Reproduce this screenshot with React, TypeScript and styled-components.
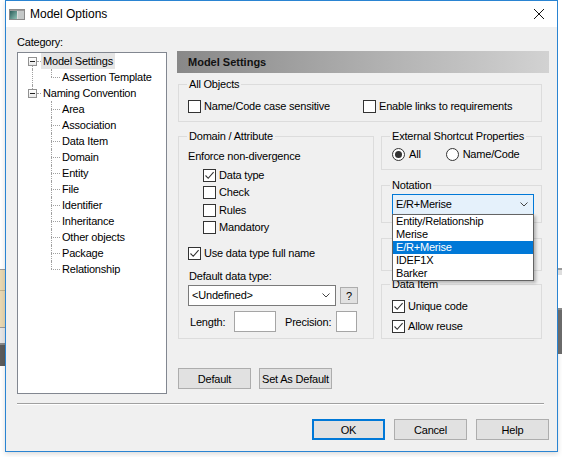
import React from "react";
import styled, { createGlobalStyle } from "styled-components";

const GlobalStyle = createGlobalStyle`
  html, body {
    margin: 0;
    padding: 0;
    background: #fff;
  }
  body {
    font-family: "Liberation Sans", Arial, sans-serif;
    font-size: 11px;
    color: #000;
  }
`;

const Screen = styled.div`
  display: flex;
  width: 562px;
  height: 457px;
  overflow: hidden;
  background: #fff;
`;

const Strip = styled.div<{ $w: number }>`
  display: flex;
  flex-direction: column;
  flex: none;
  width: ${(p) => p.$w}px;
`;

const Band = styled.div<{ $h: number; $bg: string }>`
  flex: none;
  height: ${(p) => p.$h}px;
  background: ${(p) => p.$bg};
`;

const Window = styled.div`
  box-sizing: border-box;
  flex: none;
  display: flex;
  flex-direction: column;
  width: 553px;
  height: 452px;
  border: 1px solid #2a84d2;
  background: #f0f0f0;
  box-shadow: 0 2px 5px rgba(0, 0, 0, 0.15);
`;

const TitleBar = styled.div`
  display: flex;
  align-items: center;
  height: 26px;
  padding-left: 3px;
  background: #fff;
  font-size: 12px;
`;

const TitleText = styled.span`
  margin-left: 5px;
  flex: 1;
`;

const CloseIcon = styled.svg`
  margin-right: 13px;
`;

const Body = styled.div`
  flex: 1;
  display: flex;
  flex-direction: column;
  padding: 9px 8px 0 11px;
  letter-spacing: -0.2px;
`;

const MainRow = styled.div`
  display: flex;
  align-items: flex-start;
  gap: 10px;
`;

const Sidebar = styled.div`
  display: flex;
  flex-direction: column;
  width: 150px;
`;

const CategoryLabel = styled.div`
  line-height: 13px;
  margin-bottom: 3px;
`;

const TreeBox = styled.div`
  box-sizing: border-box;
  height: 342px;
  border: 1px solid #828790;
  background: #fff;
  padding-left: 10px;
`;

const TreeRow = styled.div`
  display: flex;
  align-items: center;
  height: 16px;
`;

const ExpanderCell = styled.span<{ $up?: boolean; $down?: boolean }>`
  position: relative;
  display: flex;
  align-items: center;
  width: 9px;
  height: 16px;

  &::before {
    content: "";
    position: absolute;
    left: 4px;
    top: ${(p) => (p.$up ? "0" : "50%")};
    bottom: ${(p) => (p.$down ? "0" : "50%")};
    border-left: 1px dotted #a0a0a0;
  }
`;

const Expander = styled.span`
  position: relative;
  z-index: 1;
  box-sizing: border-box;
  width: 9px;
  height: 9px;
  border: 1px solid #919191;
  background: linear-gradient(#fff, #e8e8e8);

  &::after {
    content: "";
    position: absolute;
    left: 1px;
    right: 1px;
    top: 3px;
    height: 1px;
    background: #222;
  }
`;

const HLine = styled.span<{ $w: number }>`
  width: ${(p) => p.$w}px;
  border-top: 1px dotted #a0a0a0;
`;

const TreeLabel = styled.span<{ $selected?: boolean }>`
  padding: 0 2px;
  line-height: 16px;
  white-space: nowrap;
  background: ${(p) => (p.$selected ? "#e5e5e5" : "transparent")};
`;

const Children = styled.div<{ $line?: boolean }>`
  margin-left: 4px;
  padding-left: 18px;
  border-left: 1px dotted ${(p) => (p.$line ? "#a0a0a0" : "transparent")};
`;

const Connector = styled.span<{ $last?: boolean }>`
  position: relative;
  width: 9px;
  height: 16px;

  &::before {
    content: "";
    position: absolute;
    left: 0;
    top: 0;
    bottom: ${(p) => (p.$last ? "50%" : "0")};
    border-left: 1px dotted #a0a0a0;
  }
  &::after {
    content: "";
    position: absolute;
    left: 0;
    right: 0;
    top: 50%;
    border-top: 1px dotted #a0a0a0;
  }
`;

const Panel = styled.div`
  width: 372px;
  margin-top: 15px;
`;

const PanelHeader = styled.div`
  display: flex;
  align-items: center;
  height: 22px;
  padding-left: 11px;
  background: linear-gradient(to right, #888 0%, #a6a6a6 40%, #d2d2d2 100%);
  font-weight: bold;
  letter-spacing: 0;
  color: #111;
`;

const PanelContent = styled.div`
  padding: 0 7px 0 1px;
`;

const Group = styled.div<{ $h: number; $mt: number }>`
  box-sizing: border-box;
  height: ${(p) => p.$h}px;
  margin-top: ${(p) => p.$mt}px;
  border: 1px solid #dcdcdc;
`;

const GroupTitle = styled.div`
  width: fit-content;
  height: 13px;
  margin: -7px 0 0 8px;
  padding: 0 2px;
  line-height: 13px;
  background: #f0f0f0;
  white-space: nowrap;
`;

const GroupBody = styled.div<{ $pad: number; $mt: number }>`
  display: flex;
  flex-direction: column;
  padding-left: ${(p) => p.$pad}px;
  margin-top: ${(p) => p.$mt}px;
`;

const TwoCols = styled.div`
  display: grid;
  grid-template-columns: 175px auto;
`;

const Columns = styled.div`
  display: grid;
  grid-template-columns: 196px 161px;
  gap: 7px;
  margin-top: 14px;
`;

const Column = styled.div`
  display: flex;
  flex-direction: column;
`;

const Check = styled.label<{ $indent?: number; $mt?: number }>`
  display: flex;
  align-items: center;
  gap: 3px;
  height: 13px;
  line-height: 13px;
  margin-left: ${(p) => p.$indent ?? 0}px;
  margin-top: ${(p) => p.$mt ?? 0}px;
  white-space: nowrap;
`;

const Box = styled.span`
  display: flex;
  align-items: center;
  justify-content: center;
  box-sizing: border-box;
  flex: none;
  width: 13px;
  height: 13px;
  border: 1px solid #333;
  background: #fff;
`;

const Text = styled.div<{ $mt?: number }>`
  line-height: 13px;
  height: 13px;
  margin-top: ${(p) => p.$mt ?? 0}px;
  white-space: nowrap;
`;

const CheckList = styled.div`
  display: flex;
  flex-direction: column;
  gap: 4.5px;
  margin-top: 6px;
`;

const RadioRow = styled.div`
  display: flex;
  align-items: center;
  gap: 25px;
  margin-top: 4.5px;
`;

const RadioCircle = styled.span<{ $on?: boolean }>`
  display: flex;
  align-items: center;
  justify-content: center;
  box-sizing: border-box;
  width: 13px;
  height: 13px;
  border: 1px solid #333;
  border-radius: 50%;
  background: #fff;

  &::after {
    content: "";
    width: 7px;
    height: 7px;
    border-radius: 50%;
    background: ${(p) => (p.$on ? "#333" : "transparent")};
  }
`;

const Radio = styled.label`
  display: flex;
  align-items: center;
  gap: 4px;
  height: 13px;
  line-height: 13px;
`;

const ComboRow = styled.div`
  display: flex;
  align-items: center;
  gap: 4px;
  margin-top: 2.5px;
`;

const Combo = styled.div<{ $w: number; $focus?: boolean }>`
  position: relative;
  box-sizing: border-box;
  display: flex;
  align-items: center;
  justify-content: space-between;
  width: ${(p) => p.$w}px;
  height: 21px;
  padding: 0 5px 0 3px;
  border: 1px solid ${(p) => (p.$focus ? "#0078d7" : "#7a7a7a")};
  background: ${(p) => (p.$focus ? "#e5f1fb" : "#fff")};
  line-height: 13px;
`;

const ListPopup = styled.div`
  position: absolute;
  top: 100%;
  left: -1px;
  right: -1px;
  z-index: 10;
  border: 1px solid #646464;
  background: #fff;
  box-shadow: 2px 2px 3px rgba(0, 0, 0, 0.25);
`;

const Option = styled.div<{ $selected?: boolean }>`
  height: 13px;
  line-height: 13px;
  padding-left: 3px;
  overflow: hidden;
  background: ${(p) => (p.$selected ? "#0078d7" : "transparent")};
  color: ${(p) => (p.$selected ? "#fff" : "#000")};
`;

const SmallButton = styled.button`
  box-sizing: border-box;
  width: 18px;
  height: 17px;
  padding: 0;
  border: 1px solid #adadad;
  background: #e1e1e1;
  font-family: inherit;
  font-size: 11px;
  color: #000;
`;

const LengthRow = styled.div`
  display: grid;
  grid-template-columns: 46px 42px 60px 21px;
  align-items: center;
  height: 21px;
  margin-top: 5px;
`;

const FieldLabel = styled.span<{ $pl: number }>`
  padding-left: ${(p) => p.$pl}px;
  white-space: nowrap;
`;

const Input = styled.div`
  box-sizing: border-box;
  height: 21px;
  border: 1px solid #a5a5a5;
  background: #fff;
`;

const Button = styled.button<{ $primary?: boolean }>`
  box-sizing: border-box;
  width: 73px;
  height: 21px;
  padding: 0;
  border: 1px solid ${(p) => (p.$primary ? "#0078d7" : "#adadad")};
  box-shadow: ${(p) => (p.$primary ? "inset 0 0 0 1px #0078d7" : "none")};
  background: #e1e1e1;
  font-family: inherit;
  font-size: 11px;
  letter-spacing: -0.2px;
  color: #000;
`;

const PanelButtons = styled.div`
  display: flex;
  gap: 8px;
  margin-top: 29px;
`;

const Separator = styled.div`
  height: 1px;
  margin: 9px 5px 0 0;
  background: #a0a0a0;
  border-bottom: 1px solid #fff;
`;

const DialogButtons = styled.div`
  display: flex;
  justify-content: flex-end;
  gap: 9px;
  margin-top: 14px;
`;

const CheckMark = () => (
  <svg width="11" height="11" viewBox="0 0 11 11">
    <path d="M1.5 5.5 L4.2 8.3 L9.6 2.2" fill="none" stroke="#333" strokeWidth="1.1" />
  </svg>
);

const Chevron = () => (
  <svg width="8" height="5" viewBox="0 0 8 5">
    <path d="M0.5 0.5 L4 4 L7.5 0.5" fill="none" stroke="#444" strokeWidth="1" />
  </svg>
);

const CheckBox = ({
  label,
  checked,
  indent,
  mt,
}: {
  label: string;
  checked?: boolean;
  indent?: number;
  mt?: number;
}) => (
  <Check $indent={indent} $mt={mt}>
    <Box>{checked && <CheckMark />}</Box>
    {label}
  </Check>
);

const AppIcon = () => (
  <svg width="16" height="11" viewBox="0 0 16 11">
    <defs>
      <linearGradient id="ic" x1="0" y1="0" x2="1" y2="1">
        <stop offset="0" stopColor="#2d5f5c" />
        <stop offset="1" stopColor="#8fc2b6" />
      </linearGradient>
    </defs>
    <rect x="0.5" y="0.5" width="15" height="10" fill="#dcdcdc" stroke="#8a8a8a" />
    <rect x="1" y="2" width="7" height="8" fill="url(#ic)" />
    <rect x="9" y="2" width="6" height="8" fill="#c4c8c8" />
    <rect x="1" y="1" width="14" height="1" fill="#9a9a9a" />
  </svg>
);

const tree = [
  { label: "Model Settings", selected: true, children: ["Assertion Template"] },
  {
    label: "Naming Convention",
    children: [
      "Area",
      "Association",
      "Data Item",
      "Domain",
      "Entity",
      "File",
      "Identifier",
      "Inheritance",
      "Other objects",
      "Package",
      "Relationship",
    ],
  },
];

const notations = ["Entity/Relationship", "Merise", "E/R+Merise", "IDEF1X", "Barker"];

const App = () => {
  return (
    <Screen>
      <GlobalStyle />
      <Strip $w={5}>
        <Band $h={269} $bg="#fff" />
        <Band $h={1} $bg="#9a9a9a" />
        <Band $h={20} $bg="#e9d8b2" />
        <Band $h={1} $bg="#c4b48e" />
        <Band $h={36} $bg="#e9d8b2" />
        <Band $h={1} $bg="#9a9a9a" />
        <Band $h={15} $bg="#e6e6e6" />
        <Band $h={2} $bg="#8a8a8a" />
        <Band $h={21} $bg="#5c5c5c" />
      </Strip>

      <Window>
        <TitleBar>
          <AppIcon />
          <TitleText>Model Options</TitleText>
          <CloseIcon width="10" height="10" viewBox="0 0 10 10">
            <path d="M0 0 L10 10 M10 0 L0 10" stroke="#111" strokeWidth="1" />
          </CloseIcon>
        </TitleBar>

        <Body>
          <MainRow>
            <Sidebar>
              <CategoryLabel>Category:</CategoryLabel>
              <TreeBox>
                {tree.map((node, i) => {
                  const last = i === tree.length - 1;
                  return (
                    <div key={node.label}>
                      <TreeRow>
                        <ExpanderCell $up={i > 0} $down={!last}>
                          <Expander />
                        </ExpanderCell>
                        <HLine $w={4} />
                        <TreeLabel $selected={node.selected}>{node.label}</TreeLabel>
                      </TreeRow>
                      <Children $line={!last}>
                        {node.children.map((child, j) => (
                          <TreeRow key={child}>
                            <Connector $last={j === node.children.length - 1} />
                            <TreeLabel>{child}</TreeLabel>
                          </TreeRow>
                        ))}
                      </Children>
                    </div>
                  );
                })}
              </TreeBox>
            </Sidebar>

            <Panel>
              <PanelHeader>Model Settings</PanelHeader>
              <PanelContent>
                <Group $h={38} $mt={11}>
                  <GroupTitle>All Objects</GroupTitle>
                  <GroupBody $pad={9} $mt={9}>
                    <TwoCols>
                      <CheckBox label="Name/Code case sensitive" />
                      <CheckBox label="Enable links to requirements" />
                    </TwoCols>
                  </GroupBody>
                </Group>

                <Columns>
                  <Column>
                    <Group $h={203} $mt={0}>
                      <GroupTitle>Domain / Attribute</GroupTitle>
                      <GroupBody $pad={9} $mt={6.5}>
                        <Text>Enforce non-divergence</Text>
                        <CheckList>
                          <CheckBox label="Data type" checked indent={15} />
                          <CheckBox label="Check" indent={15} />
                          <CheckBox label="Rules" indent={15} />
                          <CheckBox label="Mandatory" indent={15} />
                        </CheckList>
                        <CheckBox label="Use data type full name" checked mt={12.5} />
                        <Text $mt={10}>
                          <FieldLabel $pl={1}>Default data type:</FieldLabel>
                        </Text>
                        <ComboRow>
                          <Combo $w={148}>
                            &lt;Undefined&gt;
                            <Chevron />
                          </Combo>
                          <SmallButton>?</SmallButton>
                        </ComboRow>
                        <LengthRow>
                          <FieldLabel $pl={2}>Length:</FieldLabel>
                          <Input />
                          <FieldLabel $pl={9}>Precision:</FieldLabel>
                          <Input />
                        </LengthRow>
                      </GroupBody>
                    </Group>
                    <PanelButtons>
                      <Button>Default</Button>
                      <Button>Set As Default</Button>
                    </PanelButtons>
                  </Column>

                  <Column>
                    <Group $h={34} $mt={0}>
                      <GroupTitle>External Shortcut Properties</GroupTitle>
                      <GroupBody $pad={10} $mt={0}>
                        <RadioRow>
                          <Radio>
                            <RadioCircle $on />
                            All
                          </Radio>
                          <Radio>
                            <RadioCircle />
                            Name/Code
                          </Radio>
                        </RadioRow>
                      </GroupBody>
                    </Group>

                    <Group $h={38} $mt={15}>
                      <GroupTitle>Notation</GroupTitle>
                      <GroupBody $pad={10} $mt={2}>
                        <Combo $w={142} $focus>
                          E/R+Merise
                          <Chevron />
                          <ListPopup>
                            {notations.map((n) => (
                              <Option key={n} $selected={n === "E/R+Merise"}>
                                {n}
                              </Option>
                            ))}
                          </ListPopup>
                        </Combo>
                      </GroupBody>
                    </Group>

                    {/* group whose title and content sit under the open list */}
                    <Group $h={33} $mt={15} />

                    <Group $h={55} $mt={13}>
                      <GroupTitle>Data Item</GroupTitle>
                      <GroupBody $pad={10} $mt={8.5}>
                        <CheckBox label="Unique code" checked />
                        <CheckBox label="Allow reuse" checked mt={7} />
                      </GroupBody>
                    </Group>
                  </Column>
                </Columns>
              </PanelContent>
            </Panel>
          </MainRow>

          <Separator />
          <DialogButtons>
            <Button $primary>OK</Button>
            <Button>Cancel</Button>
            <Button>Help</Button>
          </DialogButtons>
        </Body>
      </Window>

      <Strip $w={4}>
        <Band $h={268} $bg="#fff" />
        <Band $h={2} $bg="#9a9a9a" />
        <Band $h={5} $bg="#dedede" />
        <Band $h={33} $bg="#fff" />
        <Band $h={2} $bg="#8a8a8a" />
        <Band $h={44} $bg="#6a6a6a" />
      </Strip>
    </Screen>
  );
};

export default App;
